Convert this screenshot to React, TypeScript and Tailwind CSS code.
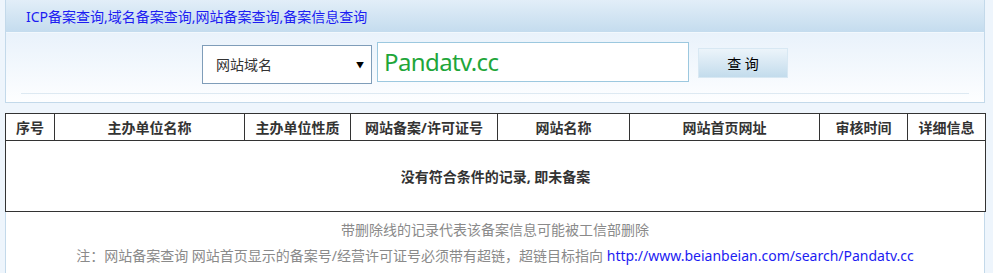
const cols = [
  { label: "序号", w: "w-[49px]" },
  { label: "主办单位名称", w: "w-[190px]" },
  { label: "主办单位性质", w: "w-[106px]" },
  { label: "网站备案/许可证号", w: "w-[147px]" },
  { label: "网站名称", w: "w-[132px]" },
  { label: "网站首页网址", w: "w-[190px]" },
  { label: "审核时间", w: "w-[88px]" },
  { label: "详细信息", w: "w-[78px]" },
];

const font = "font-['Noto_Sans','Noto_Sans_CJK_SC',sans-serif]";

export default function App() {
  return (
    <div className={`h-[273px] w-[993px] overflow-hidden bg-[#eef5fc] ${font}`}>
      {/* search panel */}
      <div className="ml-[5px] w-[980px] border-x border-b border-[#c3d9ea] bg-white">
        <div className="flex h-[33px] items-center border-b border-[#f2f8fd] bg-gradient-to-b from-[#e2eef8] to-[#c4dcee] pl-[20px] text-[14px] text-[#1c1cf2]">
          ICP备案查询,域名备案查询,网站备案查询,备案信息查询
        </div>
        <div className="flex h-[69px] flex-col bg-gradient-to-b from-[#e9f2fb] to-[#fdfeff]">
          <div className="flex h-[52px] items-start justify-center">
            <div className="mt-[12px] flex h-[39px] w-[170px] items-center justify-between border border-[#7f9db9] bg-white pl-[13px] pr-[7px] text-[14px] text-[#333]">
              <span>网站域名</span>
              <span className="text-[8px] text-black">▼</span>
            </div>
            <div className="ml-[5px] mt-[9px] flex h-[40px] w-[312px] items-center border border-[#9cc8df] bg-white pl-[6px] text-[24px] leading-none tracking-[-0.6px] text-[#1fa63a]">
              Pandatv.cc
            </div>
            <button className="ml-[9px] mt-[15px] flex h-[30px] w-[90px] items-center justify-center border border-[#d8e8f3] bg-gradient-to-b from-[#ecf4fa] to-[#c3dcec] text-[14px] text-black">
              查 询
            </button>
          </div>
          <div className="mx-[15px] mt-[8px] h-px bg-[#dde9f2]" />
        </div>
      </div>

      {/* results */}
      <table className="ml-[5px] mt-[10px] w-[980px] table-fixed border-collapse bg-white text-[14px] text-[#333]">
        <colgroup>
          {cols.map((c) => (
            <col key={c.label} className={c.w} />
          ))}
        </colgroup>
        <thead>
          <tr className="h-[27px]">
            {cols.map((c) => (
              <th key={c.label} className="border border-[#333] p-0 text-center font-bold">
                {c.label}
              </th>
            ))}
          </tr>
        </thead>
        <tbody>
          <tr className="h-[71px]">
            <td colSpan={8} className="border border-[#333] text-center font-bold">
              没有符合条件的记录, 即未备案
            </td>
          </tr>
        </tbody>
      </table>

      <div className="ml-[5px] flex h-[61px] w-[980px] flex-col items-center border-x border-[#c3d9ea] bg-white pt-[6px] text-[14px] text-[#8a8a8a]">
        <p className="leading-[24px]">带删除线的记录代表该备案信息可能被工信部删除</p>
        <p className="mt-[2px] leading-[24px]">
          注：网站备案查询 网站首页显示的备案号/经营许可证号必须带有超链，超链目标指向{" "}
          <a className="text-[#1c1cf2]">http://www.beianbeian.com/search/Pandatv.cc</a>
        </p>
      </div>
    </div>
  );
}
